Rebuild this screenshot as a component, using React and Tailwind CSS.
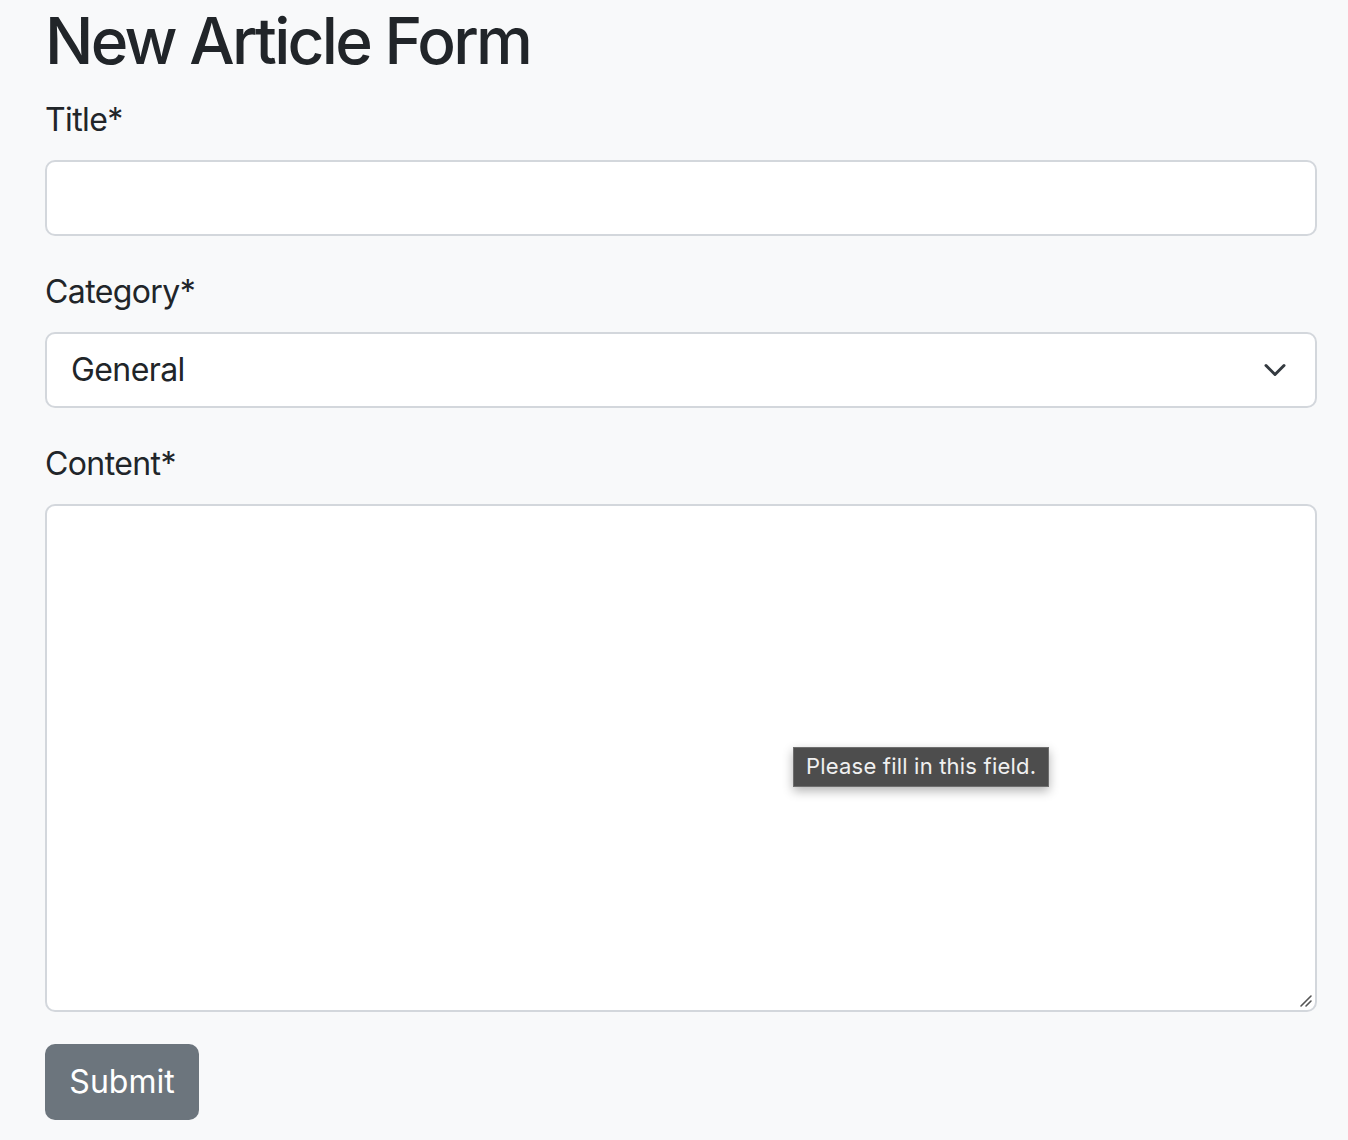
import { useState } from 'react';

// Formulario nuovo articolo (stile bootstrap, scala 2x)
const CATEGORIES = ['General', 'News', 'Tutorial', 'Opinion'];

function Field({ label, children }) {
  return (
    <div className="mb-[32px]">
      <label className="block mb-[16px] text-[32px] leading-[48px] tracking-[-0.6px] text-[#212529]">
        {label}
      </label>
      {children}
    </div>
  );
}

export default function App() {
  const [title, setTitle] = useState('');
  const [category, setCategory] = useState('General');
  const [content, setContent] = useState('');

  return (
    <div
      className="min-h-[1140px] bg-[#f8f9fa] pl-[45px] pr-[31px] pt-[3px] text-[#212529]"
      style={{ fontFamily: 'Inter, "Noto Sans", sans-serif' }}
    >
      <h1 className="mb-[16px] text-[64px] leading-[76.8px] font-medium tracking-[-2.7px]">
        New Article Form
      </h1>

      <form onSubmit={(e) => e.preventDefault()}>
        <Field label="Title*">
          <input
            type="text"
            value={title}
            onChange={(e) => setTitle(e.target.value)}
            className="block w-full h-[76px] px-[24px] text-[32px] bg-white border-2 border-[#d3d7dc] rounded-[10px] outline-none"
          />
        </Field>

        <Field label="Category*">
          <div className="relative">
            <select
              value={category}
              onChange={(e) => setCategory(e.target.value)}
              className="block w-full h-[76px] pl-[24px] pr-[72px] text-[32px] tracking-[-0.6px] text-[#212529] bg-white border-2 border-[#d3d7dc] rounded-[10px] appearance-none outline-none"
            >
              {CATEGORIES.map((c) => (
                <option key={c}>{c}</option>
              ))}
            </select>
            <svg
              className="absolute right-[30px] top-1/2 -translate-y-1/2 pointer-events-none"
              width="24"
              height="24"
              viewBox="0 0 16 16"
              fill="none"
            >
              <path
                d="m2 5 6 6 6-6"
                stroke="#343a40"
                strokeWidth="2"
                strokeLinecap="round"
                strokeLinejoin="round"
              />
            </svg>
          </div>
        </Field>

        <Field label="Content*">
          <div className="relative">
            <textarea
              value={content}
              onChange={(e) => setContent(e.target.value)}
              className="block w-full h-[508px] px-[24px] py-[12px] text-[32px] bg-white border-2 border-[#d3d7dc] rounded-[10px] outline-none resize-none"
            />
            {/* maniglia resize */}
            <svg
              className="absolute right-[4px] bottom-[4px] pointer-events-none"
              width="14"
              height="14"
              viewBox="0 0 14 14"
            >
              <path d="M2 12 L12 2 M7 12 L12 7" stroke="#555" strokeWidth="1.6" strokeLinecap="round" />
            </svg>
            {/* tooltip validazione */}
            <div className="absolute left-[748px] top-[243px] h-[40px] w-[256px] flex items-center px-[12px] bg-[#4d4d4d] border border-[#6e6e6e] text-[#f0f0f0] text-[22px] tracking-[0.2px] shadow-[0_4px_10px_rgba(0,0,0,0.3)] whitespace-nowrap">
              Please fill in this field.
            </div>
          </div>
        </Field>

        <button
          type="submit"
          className="h-[76px] w-[154px] text-[32px] text-white bg-[#6c757d] rounded-[10px]"
        >
          Submit
        </button>
      </form>
    </div>
  );
}
